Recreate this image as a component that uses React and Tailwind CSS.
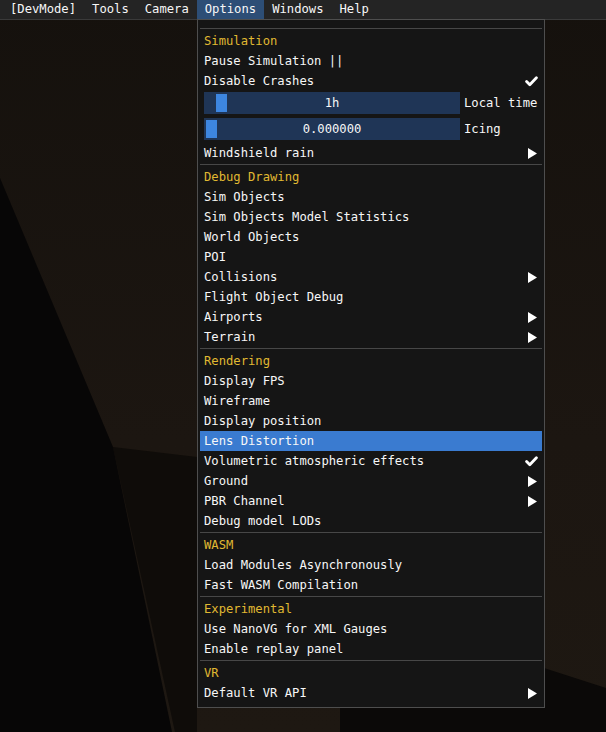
import React from "react";

const menus = ["[DevMode]", "Tools", "Camera", "Options", "Windows", "Help"];

const sections = [
  {
    title: "Debug Drawing",
    items: [
      { label: "Sim Objects" },
      { label: "Sim Objects Model Statistics" },
      { label: "World Objects" },
      { label: "POI" },
      { label: "Collisions", sub: true },
      { label: "Flight Object Debug" },
      { label: "Airports", sub: true },
      { label: "Terrain", sub: true },
    ],
  },
  {
    title: "Rendering",
    items: [
      { label: "Display FPS" },
      { label: "Wireframe" },
      { label: "Display position" },
      { label: "Lens Distortion", active: true },
      { label: "Volumetric atmospheric effects", checked: true },
      { label: "Ground", sub: true },
      { label: "PBR Channel", sub: true },
      { label: "Debug model LODs" },
    ],
  },
  {
    title: "WASM",
    items: [{ label: "Load Modules Asynchronously" }, { label: "Fast WASM Compilation" }],
  },
  {
    title: "Experimental",
    items: [{ label: "Use NanoVG for XML Gauges" }, { label: "Enable replay panel" }],
  },
  {
    title: "VR",
    items: [{ label: "Default VR API", sub: true }],
  },
];

function Arrow() {
  return (
    <svg width="9" height="11" viewBox="0 0 9 11" className="mr-[1px]">
      <polygon points="0,0 9,5.5 0,11" fill="#ffffff" />
    </svg>
  );
}

function Check() {
  return (
    <svg width="13" height="11" viewBox="0 0 13 11">
      <polyline points="1.6,5.6 4.8,8.8 11.4,1.8" fill="none" stroke="#ffffff" strokeWidth="2.8" strokeLinecap="round" strokeLinejoin="round" />
    </svg>
  );
}

function Row({ label, sub, checked, active, header }) {
  return (
    <div
      className={
        "flex h-[20px] items-center justify-between px-[4px] " +
        (active ? "bg-[#3a7bd0] " : "") +
        (header ? "text-[#e0b932]" : "text-[#f7f7f7]")
      }
    >
      <span className="whitespace-pre leading-none">{label}</span>
      {sub && <Arrow />}
      {checked && <Check />}
    </div>
  );
}

function Separator() {
  return <div className="mt-px mb-[2px] h-px bg-[#474747]" />;
}

function Slider({ value, label, grab }) {
  return (
    <div className="flex h-[22px] items-center px-[4px]">
      <div className="relative flex h-[22px] w-[256px] items-center justify-center bg-[#1f3556]">
        <div className={"absolute top-[2px] bottom-[2px] w-[11px] bg-[#3d86e0] " + grab} />
        <span className="relative leading-none text-[#f7f7f7]">{value}</span>
      </div>
      <span className="ml-[4px] leading-none text-[#f7f7f7]">{label}</span>
    </div>
  );
}

export default function App() {
  return (
    <div className="relative h-[732px] w-[606px] overflow-hidden bg-[#1a1510] font-['DejaVu_Sans_Mono','Liberation_Mono',monospace] text-[12.2px]">
      <svg className="absolute inset-0" width="606" height="732" viewBox="0 0 606 732">
        <defs>
          <linearGradient id="sky" x1="0" y1="0" x2="0" y2="1">
            <stop offset="0" stopColor="#15110d" />
            <stop offset="0.6" stopColor="#1c1611" />
            <stop offset="1" stopColor="#1e1812" />
          </linearGradient>
        </defs>
        <rect width="606" height="732" fill="url(#sky)" />
        <polygon points="113,447 197,457 197,732 175,732" fill="#0f0c09" />
        <polygon points="544,668 606,688 606,732 340,732 340,708 544,708" fill="#0b0908" />
        <polygon points="0,178 113,447 172,732 0,732" fill="#070606" />
      </svg>

      <nav className="relative flex h-[20px] items-stretch border-b border-[#3a3a3a] bg-[#242424] pl-[2px] text-[#f7f7f7]">
        {menus.map((m) => (
          <div
            key={m}
            className={"flex items-center px-[8px] leading-none " + (m === "Options" ? "bg-[#2d4e76]" : "")}
          >
            {m}
          </div>
        ))}
      </nav>

      <div className="absolute left-[197px] top-[19px] w-[348px] border border-[#4e4e4e] bg-[#151515] px-[2px] pt-[8px] pb-[4px]">
        <div className="mb-[2px] h-px bg-[#474747]" />
        <Row label="Simulation" header />
        <Row label="Pause Simulation ||" />
        <Row label="Disable Crashes" checked />
        <div className="mt-px">
          <Slider value="1h" label="Local time" grab="left-[12px]" />
        </div>
        <div className="mt-[4px]">
          <Slider value="0.000000" label="Icing" grab="left-[2px] w-[10px]" />
        </div>
        <div className="mt-[3px]">
          <Row label="Windshield rain" sub />
        </div>
        {sections.map((s) => (
          <div key={s.title}>
            <Separator />
            <Row label={s.title} header />
            {s.items.map((it) => (
              <Row key={it.label} {...it} />
            ))}
          </div>
        ))}
      </div>
    </div>
  );
}
